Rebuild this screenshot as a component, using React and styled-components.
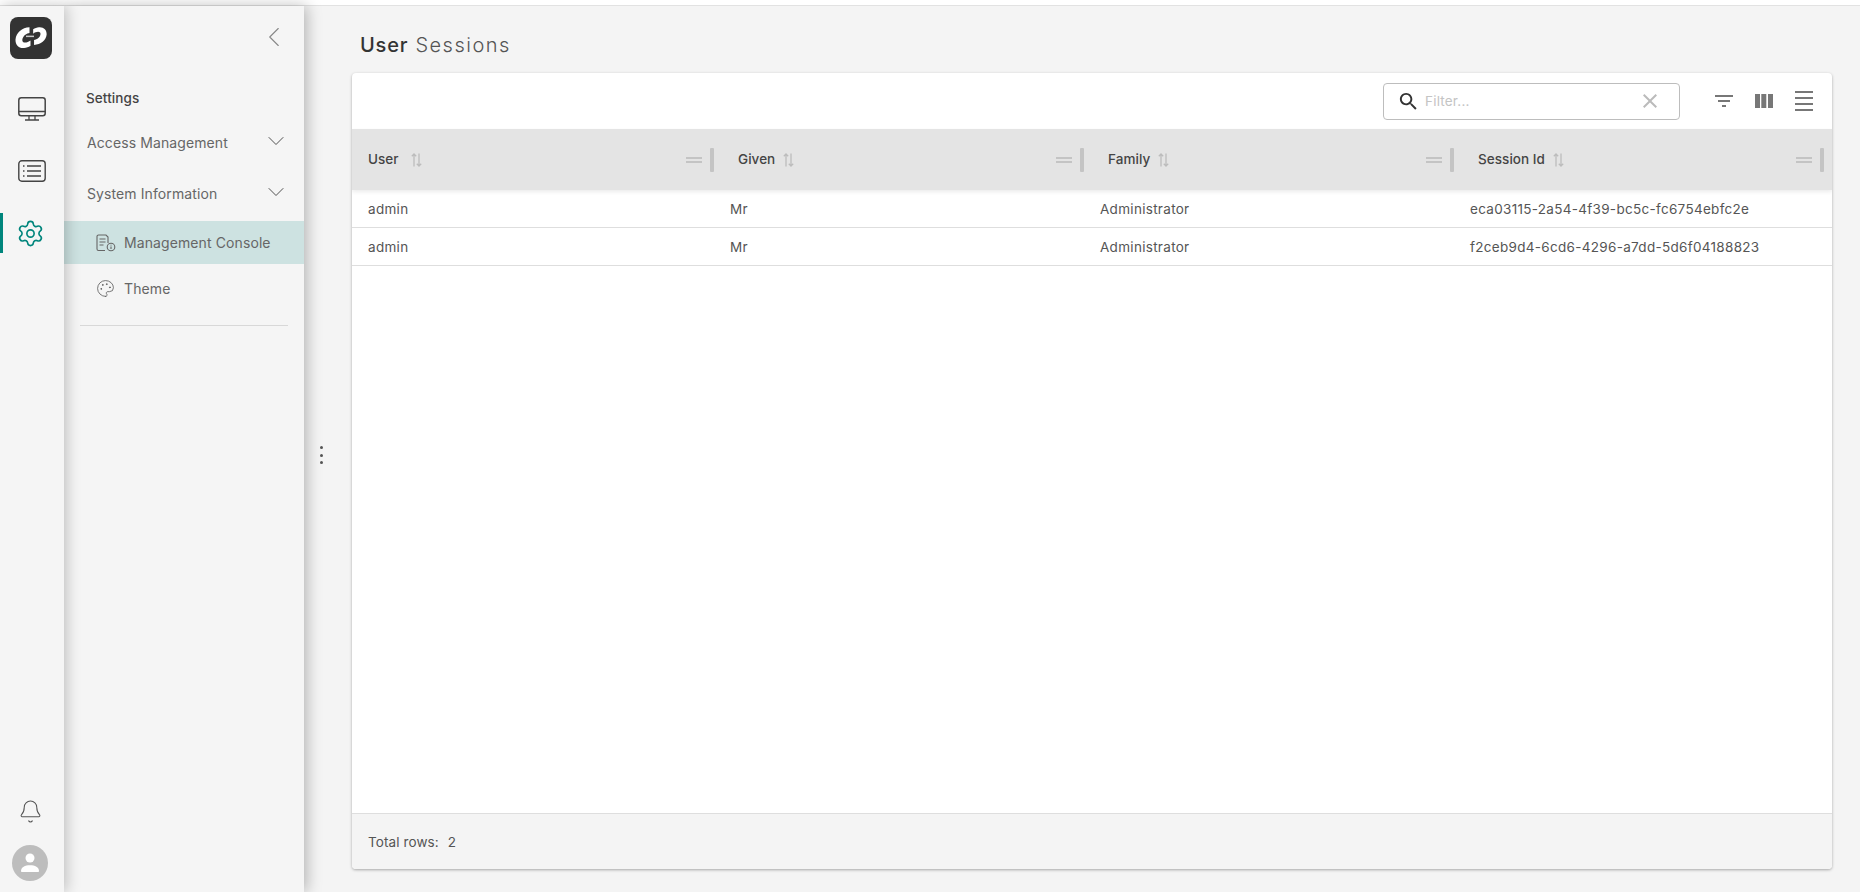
import React from 'react';
import styled, { createGlobalStyle } from 'styled-components';
import { Settings, Bell, Palette, ChevronLeft, ChevronDown } from 'lucide-react';

const Global = createGlobalStyle`
  html, body { margin: 0; padding: 0; height: 100%; overflow: hidden; background: #f4f4f4; }
  #root { height: 100%; }
  * { box-sizing: border-box; }
  body { font-family: Inter, "Liberation Sans", sans-serif; color: #555; }
`;

const Page = styled.div`
  height: 892px; display: flex; flex-direction: column;
`;
const TopStrip = styled.div`
  height: 6px; flex: none; background: #fff; border-bottom: 1px solid #e2e2e2;
`;
const Shell = styled.div`
  flex: 1; min-height: 0; display: flex;
`;
const Rail = styled.nav`
  width: 64px; flex: none; background: #f5f5f5; display: flex; flex-direction: column;
  align-items: center; position: relative; z-index: 3;
  box-shadow: 2px 0 14px rgba(0,0,0,.24); padding-top: 11px;
`;
const Logo = styled.div`
  width: 42px; height: 42px; border-radius: 8px; background: #333; display: flex;
  align-items: center; justify-content: center; margin: 0 2px 31px 0;
`;
const RailItem = styled.div`
  width: 64px; height: ${p => p.$h}px; margin-top: ${p => p.$mt || 0}px; display: flex; align-items: center; justify-content: center;
  padding-right: ${p => p.$shift || 0}px;
  color: ${p => p.$active ? '#00857c' : '#444'}; position: relative;
  ${p => p.$active && `&::before { content: ''; position: absolute; left: 0; top: 0; bottom: 0; width: 3px; background: #00857c; }`}
`;
const RailSpacer = styled.div`flex: 1;`;
const Avatar = styled.div`
  width: 36px; height: 36px; border-radius: 50%; background: #bdbdbd; display: flex;
  align-items: center; justify-content: center; margin: 21px 4px 11px 0;
`;
const Panel = styled.aside`
  width: 240px; flex: none; background: #f5f5f5; position: relative; z-index: 2;
  box-shadow: 3px 0 14px rgba(0,0,0,.26); display: flex; flex-direction: column;
`;
const CollapseRow = styled.div`
  height: 62px; display: flex; justify-content: flex-end; align-items: center;
  padding-right: 13px; color: #888;
`;
const PanelTitle = styled.div`
  margin: 22px 0 0 22px; font-size: 13.5px; font-weight: 500; line-height: 16px; color: #444; letter-spacing: .1px;
`;
const Group = styled.div`
  height: ${p => p.$h}px; margin-top: ${p => p.$mt || 0}px; display: flex; align-items: center; justify-content: space-between;
  padding: 0 14px 0 23px; font-size: 14px; letter-spacing: .1px; color: #666;
`;
const GroupChevron = styled(ChevronDown)`
  margin-bottom: 3px; color: #444;
`;
const SubItem = styled.div`
  height: ${p => p.$h}px; margin-top: ${p => p.$mt || 0}px; display: flex; align-items: center; gap: ${p => p.$gap}px; padding-left: ${p => p.$pl}px;
  font-size: 14px; letter-spacing: .1px; color: #666;
  background: ${p => p.$active ? '#cde2e1' : 'transparent'};
`;
const Divider = styled.div`
  height: 1px; background: #d8d8d8; margin: 12px 16px 0 16px;
`;
const Gutter = styled.div`
  width: 48px; flex: none; display: flex; flex-direction: column; gap: 4.5px; align-items: flex-start;
  justify-content: center; padding: 12px 0 0 16px;
`;
const Dot = styled.span`
  width: 3px; height: 3px; border-radius: 50%; background: #555;
`;
const Main = styled.main`
  flex: 1; min-width: 0; display: flex; flex-direction: column; padding: 0 28px 23px 0;
`;
const Title = styled.h1`
  margin: 0; height: 67px; padding: 26px 0 0 8px; font-size: 20px; line-height: 26px; font-weight: 300;
  letter-spacing: 1.5px; color: #555;
  b { font-weight: 500; color: #333; letter-spacing: .8px; }
`;
const Card = styled.section`
  flex: 1; min-height: 0; background: #fff; border-radius: 4px; display: flex; flex-direction: column;
  box-shadow: 0 1px 3px rgba(0,0,0,.32); overflow: hidden;
`;
const Toolbar = styled.div`
  height: 56px; flex: none; display: flex; align-items: center; justify-content: flex-end; padding-right: 19px;
`;
const SearchBox = styled.div`
  width: 297px; height: 37px; border: 1px solid #bdbdbd; border-radius: 4px; display: flex;
  align-items: center; padding: 0 17px 0 13px; margin-right: 35px;
`;
const Placeholder = styled.span`
  flex: 1; font-size: 13.5px; color: #c4c4c4; margin-left: 5px; letter-spacing: .2px;
`;
const ToolIcon = styled.svg`
  display: block; margin-left: ${p => p.$ml || 0}px; flex: none;
`;
const HeaderRow = styled.div`
  height: 61px; flex: none; background: #e4e4e4; display: grid; grid-template-columns: 362px 370px 370px 370px 8px;
  position: relative; box-shadow: 0 2px 4px rgba(0,0,0,.08);
`;
const HeadCell = styled.div`
  display: flex; align-items: center; padding-left: ${p => p.$first ? 16 : 24}px;
  font-size: 13.5px; font-weight: 500; color: #444; letter-spacing: .05px;
`;
const HeadLabel = styled.span`
  margin-bottom: 1px;
`;
const SortIcon = styled.svg`
  margin-left: ${p => p.$ml}px; flex: none;
`;
const Grip = styled.span`
  margin-left: auto; width: 16px; height: 6px; border-top: 2px solid #c4c4c4; border-bottom: 2px solid #c4c4c4; margin-right: 8px;
`;
const Resizer = styled.span`
  width: 4px; height: 24px; border-radius: 1px; background: #c4c4c4;
`;
const Rows = styled.div`
  flex: 1; min-height: 0;
`;
const Row = styled.div`
  height: 38px; display: grid; grid-template-columns: 362px 370px 370px 370px 8px; border-bottom: 1px solid #dedede;
  align-items: center;
`;
const Cell = styled.div`
  padding-left: 16px; font-size: 13.5px; letter-spacing: .3px; color: #555;
`;
const Footer = styled.footer`
  height: 56px; flex: none; background: #f4f4f4; border-top: 1px solid #dedede; display: flex; align-items: center;
  padding-left: 16px; font-size: 13.5px; color: #555; gap: 9px; letter-spacing: .1px;
`;

const linkPiece = "M15.500 1.300C8 1.500 2 7 1.500 13.500 1.200 19 5 22.500 10 22c2.500-.2 4.500-1 6.500-2.300v-5.200c-2.500 1.800-6 3-7.700 1.300C7.300 13.500 9.500 8 15.500 7z";
const LogoMark = () => (
  <svg width="34" height="24" viewBox="0 0 34 24">
    <path d={linkPiece} fill="#fff"/>
    <path d={linkPiece} fill="#fff" transform="translate(34 20) scale(-.9 -.85)"/>
    <rect x="12" y="9.600" width="8" height="1.500" fill="#c8c8c8"/>
  </svg>
);
const MonitorIcon = () => (
  <svg width="28" height="24" viewBox="0 0 28 24" fill="none" stroke="#444" strokeWidth="1.5">
    <rect x=".8" y=".8" width="26.400" height="18" rx="2.500"/>
    <path d="M.8 14.500h26.400M11 19v3.500M17 19v3.500M7 23h14" strokeWidth="1.300"/>
  </svg>
);
const ListIcon = () => (
  <svg width="28" height="22" viewBox="0 0 28 22" fill="none" stroke="#444" strokeWidth="1.400">
    <rect x=".8" y=".8" width="26.400" height="20.400" rx="3"/>
    <path d="M9 6h14M9 11h14M9 16h14" strokeWidth="1.500"/>
    <path d="M5 6h1.500M5 11h1.500M5 16h1.500" strokeWidth="1.600"/>
  </svg>
);
const FileInfo = () => (
  <svg width="20" height="18" viewBox="0 0 20 18" fill="none" stroke="#666" strokeWidth="1.100">
    <path d="M9 16.500H2.500A1.500 1.500 0 0 1 1 15V2.500A1.500 1.500 0 0 1 2.500 1H10l2 2v6"/>
    <path d="M3.500 5h6M3.500 8h6M3.500 11h4"/>
    <circle cx="15" cy="13" r="3.800"/>
    <path d="M15 12.500v2.500M15 10.800v.6"/>
  </svg>
);
const SearchGlyph = () => (
  <svg width="23" height="23" viewBox="0 0 24 24" fill="#333">
    <path d="M15.500 14h-.79l-.28-.27C15.410 12.590 16 11.110 16 9.500 16 5.910 13.090 3 9.500 3S3 5.910 3 9.500 5.910 16 9.500 16c1.610 0 3.090-.59 4.230-1.570l.27.28v.79l5 4.990L20.490 19l-4.990-5zm-6 0C7.010 14 5 11.990 5 9.500S7.010 5 9.500 5 14 7.010 14 9.500 11.990 14 9.500 14z"/>
  </svg>
);
const CloseGlyph = () => (
  <svg width="24" height="24" viewBox="0 0 24 24" fill="#bbb">
    <path d="M19 6.410 17.590 5 12 10.590 6.410 5 5 6.410 10.590 12 5 17.590 6.410 19 12 13.410 17.590 19 19 17.590 13.410 12z"/>
  </svg>
);
const SortArrows = ({ ml }) => (
  <SortIcon $ml={ml} width="11" height="14" viewBox="0 0 11 14" fill="none" stroke="#bcbcbc" strokeWidth="1.300">
    <path d="M3 13.500V1M.8 3.200 3 1l2.200 2.200"/>
    <path d="M8 .5V13M5.800 10.800 8 13l2.200-2.200"/>
  </SortIcon>
);
const AvatarIcon = () => (
  <svg width="20" height="20" viewBox="0 0 20 20" fill="#fff">
    <circle cx="10" cy="5" r="4.500"/>
    <path d="M1 18c0-4 4-5.800 9-5.800s9 1.800 9 5.800c0 .6-.5 1-1 1H2c-.5 0-1-.4-1-1z"/>
  </svg>
);

const cols = [
  { label: 'User', ml: 12, first: true },
  { label: 'Given', ml: 8 },
  { label: 'Family', ml: 8 },
  { label: 'Session Id', ml: 8 },
];
const rows = [
  ['admin', 'Mr', 'Administrator', 'eca03115-2a54-4f39-bc5c-fc6754ebfc2e'],
  ['admin', 'Mr', 'Administrator', 'f2ceb9d4-6cd6-4296-a7dd-5d6f04188823'],
];

export default function App() {
  return (
    <Page>
      <Global />
      <TopStrip />
      <Shell>
        <Rail>
          <Logo><LogoMark /></Logo>
          <RailItem $h={38}><MonitorIcon /></RailItem>
          <RailItem $h={36} $mt={25}><ListIcon /></RailItem>
          <RailItem $h={40} $mt={24} $active $shift={3}><Settings size={29} strokeWidth={1.35} /></RailItem>
          <RailSpacer />
          <RailItem $h={26} $shift={3}><Bell size={25} strokeWidth={1} color="#555" /></RailItem>
          <Avatar><AvatarIcon /></Avatar>
        </Rail>
        <Panel>
          <CollapseRow><ChevronLeft size={34} strokeWidth={.8} /></CollapseRow>
          <PanelTitle>Settings</PanelTitle>
          <Group $h={51} $mt={11}>Access Management<GroupChevron size={28} strokeWidth={.8} /></Group>
          <Group $h={51}>System Information<GroupChevron size={28} strokeWidth={.8} /></Group>
          <SubItem $h={43} $mt={2} $active $pl={32} $gap={8}><FileInfo />Management Console</SubItem>
          <SubItem $h={49} $pl={32} $gap={9}><Palette size={19} strokeWidth={1} color="#555" />Theme</SubItem>
          <Divider />
        </Panel>
        <Gutter><Dot /><Dot /><Dot /></Gutter>
        <Main>
          <Title><b>User</b> Sessions</Title>
          <Card>
            <Toolbar>
              <SearchBox>
                <SearchGlyph />
                <Placeholder>Filter...</Placeholder>
                <CloseGlyph />
              </SearchBox>
              <ToolIcon width="18" height="12" viewBox="0 0 18 12" fill="#777">
                <rect width="18" height="2" /><rect x="3" y="5" width="12" height="2" /><rect x="7" y="10" width="4" height="2" />
              </ToolIcon>
              <ToolIcon $ml={22} width="18" height="14" viewBox="0 0 18 14" fill="#777">
                <rect width="5" height="14" /><rect x="6.300" width="5" height="14" /><rect x="13" width="5" height="14" />
              </ToolIcon>
              <ToolIcon $ml={22} width="18" height="20" viewBox="0 0 18 20" fill="#777">
                <rect width="18" height="2" /><rect y="6" width="18" height="2" /><rect y="12" width="18" height="2" /><rect y="18" width="18" height="2" />
              </ToolIcon>
            </Toolbar>
            <HeaderRow>
              {cols.map(c => (
                <HeadCell key={c.label} $first={c.first}>
                  <HeadLabel>{c.label}</HeadLabel>
                  <SortArrows ml={c.ml} />
                  <Grip />
                  <Resizer />
                </HeadCell>
              ))}
            </HeaderRow>
            <Rows>
              {rows.map(r => (
                <Row key={r[3]}>
                  {r.map((v, j) => <Cell key={j}>{v}</Cell>)}
                </Row>
              ))}
            </Rows>
            <Footer><span>Total rows:</span><span>2</span></Footer>
          </Card>
        </Main>
      </Shell>
    </Page>
  );
}
